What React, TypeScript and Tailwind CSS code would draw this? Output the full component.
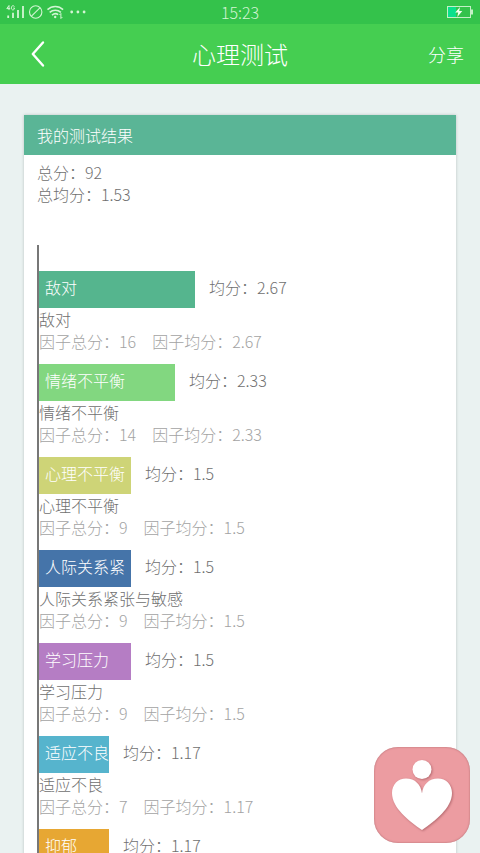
type Factor = {
  name: string;
  total: number;
  average: string;
  width: number;
  color: string;
};

const factors: Factor[] = [
  { name: '敌对', total: 16, average: '2.67', width: 156, color: 'bg-[#55b58e]' },
  { name: '情绪不平衡', total: 14, average: '2.33', width: 136, color: 'bg-[#82d780]' },
  { name: '心理不平衡', total: 9, average: '1.5', width: 92, color: 'bg-[#ced477]' },
  { name: '人际关系紧张与敏感', total: 9, average: '1.5', width: 92, color: 'bg-[#4574a9]' },
  { name: '学习压力', total: 9, average: '1.5', width: 92, color: 'bg-[#b57dc4]' },
  { name: '适应不良', total: 7, average: '1.17', width: 70, color: 'bg-[#56b4cd]' },
  { name: '抑郁', total: 7, average: '1.17', width: 70, color: 'bg-[#e7a733]' },
];

// the bars only have room for this many characters
const LABEL_LENGTH = 5;

function StatusIcons() {
  return (
    <svg width="82" height="16" viewBox="0 0 82 16" fill="none" stroke="currentColor" aria-hidden="true">
      {/* 4G */}
      <path d="M3 1.5.8 4.600h3.400M3 1.500v4.600M8.400 2.600C7.800 1.200 5.400 1.300 5.400 3.900s2.800 2.800 3.200.2H7.200" />
      {/* signal bars */}
      <path d="M2.200 11.500V14M7 8.800V14M12 6v8M17 2v12" strokeWidth="1.800" />
      {/* muted */}
      <circle cx="29.700" cy="8" r="6.200" strokeWidth="1.100" />
      <path d="m25.500 12.200 8.400-8.400" strokeWidth="1.100" />
      {/* wifi */}
      <path d="M41.500 5.600c4.400-4.200 11.200-4.200 15.600 0M43.700 8.400c3.200-3 8-3 11.200 0M46 11.100c2-1.700 4.600-1.700 6.200-.4" strokeWidth="1.500" />
      <circle cx="49.200" cy="13" r="1.200" fill="currentColor" stroke="none" />
      <path d="M54.900 9.500v5M54.900 9.500l-1.500 1.500M54.900 14.500l1.500-1.500" strokeWidth="1" />
      <g fill="currentColor" stroke="none">
        <circle cx="65.700" cy="8" r="1.400" />
        <circle cx="71.900" cy="8" r="1.400" />
        <circle cx="78.100" cy="8" r="1.400" />
      </g>
    </svg>
  );
}

function BatteryIcon() {
  return (
    <svg width="28" height="14" viewBox="0 0 28 14" aria-hidden="true">
      <rect x="1.500" y="1.500" width="23" height="11" fill="none" stroke="#c4f0c6" />
      <rect x="2" y="2" width="8" height="10" fill="#0be08c" />
      <path d="M25 4.500h2v5h-2z" fill="#c4f0c6" />
      <path d="m14 2-4.800 5.600h3L11.300 12l5-6h-3.100z" fill="#f2fff2" />
    </svg>
  );
}

function FactorRow({ factor }: { factor: Factor }) {
  return (
    <li className="mb-3">
      <div className="flex leading-8">
        <div
          className={`h-[37px] shrink-0 pl-1.5 whitespace-nowrap text-white ${factor.color}`}
          style={{ width: factor.width }}
        >
          {factor.name.slice(0, LABEL_LENGTH)}
        </div>
        <span className="ml-3.5">均分：{factor.average}</span>
      </div>
      <h2>{factor.name}</h2>
      <p className="flex gap-4 text-[#a3a3a3]">
        <span>因子总分：{factor.total}</span>
        <span>因子均分：{factor.average}</span>
      </p>
    </li>
  );
}

export default function App() {
  return (
    <div className="flex h-screen flex-col overflow-hidden bg-[#eaf2f1] font-['Noto_Sans_CJK_SC',sans-serif] text-base font-light">
      <div className="grid h-6 shrink-0 grid-cols-3 items-center bg-[#34c24b] px-1.5 text-[#d3f5d4]">
        <StatusIcons />
        <time className="text-center leading-6">15:23</time>
        <div className="flex justify-end">
          <BatteryIcon />
        </div>
      </div>

      <header className="grid h-15 shrink-0 grid-cols-[1fr_auto_1fr] items-center bg-[#45ce51] px-4 text-white">
        <button type="button" aria-label="返回" className="flex w-11 justify-center">
          <svg width="14" height="28" viewBox="0 0 14 28" fill="none" stroke="currentColor" strokeWidth="2.400" strokeLinecap="round" strokeLinejoin="round">
            <path d="M12 2.500 1.800 14 12 25.500" />
          </svg>
        </button>
        <h1 className="text-2xl">心理测试</h1>
        <button type="button" className="justify-self-end text-lg">
          分享
        </button>
      </header>

      <main className="px-6 pt-[31px]">
        <section className="bg-white leading-[22px] text-[#707070] shadow-[0_0_3px_rgba(0,0,0,0.2)]">
          <div className="bg-[#5ab596] px-[13px] leading-10 text-white">我的测试结果</div>
          <div className="px-[13px] pt-1.5">
            <p>总分：92</p>
            <p>总均分：1.53</p>
          </div>
          <ul className="mt-10 ml-[13px] border-l-2 border-[#777] pt-[26px]">
            {factors.map((factor) => (
              <FactorRow key={factor.name} factor={factor} />
            ))}
          </ul>
        </section>
      </main>

      <button
        type="button"
        aria-label="心理咨询"
        className="fixed right-2.5 bottom-2.5 size-24 rounded-3xl bg-[#ec9ca1] shadow-[inset_0_0_2px_#a86469]"
      >
        <svg viewBox="0 0 96 96" className="size-full drop-shadow-[1px_1px_1px_rgba(130,60,65,0.5)]" fill="#fff" aria-hidden="true">
          <circle cx="48" cy="22.500" r="9.500" />
          <path d="M48 83C35 74 18 61 18 46c0-8.500 6-14.500 14-14.500 9 0 15 6 16 15 1-9 7-15 16-15 8 0 14 6 14 14.500C78 61 61 74 48 83z" />
        </svg>
      </button>
    </div>
  );
}
